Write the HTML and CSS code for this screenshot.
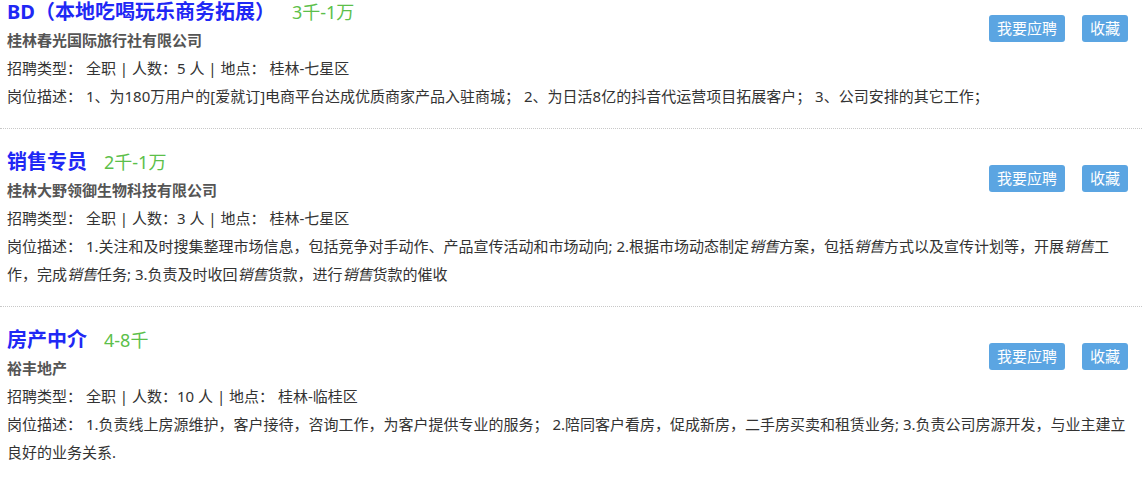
FILE: index.html
```html
<!DOCTYPE html>
<html lang="zh-CN">
<head>
  <meta charset="UTF-8">
  <meta name="viewport" content="width=device-width, initial-scale=1.0">
  <title>招聘信息</title>
  <link rel="stylesheet" href="styles.css">
</head>
<body>

  <div class="job-list">

    <div class="job">
      <div class="job-btns">
        <a class="btn">我要应聘</a>
        <a class="btn">收藏</a>
      </div>
      <h3 class="job-title">BD（本地吃喝玩乐商务拓展）<span class="salary">3千-1万</span></h3>
      <div class="company">桂林春光国际旅行社有限公司</div>
      <div class="line">招聘类型： 全职 | 人数：5 人 | 地点： 桂林-七星区</div>
      <div class="line">岗位描述： 1、为180万用户的[爱就订]电商平台达成优质商家产品入驻商城； 2、为日活8亿的抖音代运营项目拓展客户； 3、公司安排的其它工作；</div>
    </div>

    <div class="job">
      <div class="job-btns">
        <a class="btn">我要应聘</a>
        <a class="btn">收藏</a>
      </div>
      <h3 class="job-title">销售专员<span class="salary">2千-1万</span></h3>
      <div class="company">桂林大野领御生物科技有限公司</div>
      <div class="line">招聘类型： 全职 | 人数：3 人 | 地点： 桂林-七星区</div>
      <div class="line">岗位描述： 1.关注和及时搜集整理市场信息，包括竞争对手动作、产品宣传活动和市场动向; 2.根据市场动态制定<em>销售</em>方案，包括<em>销售</em>方式以及宣传计划等，开展<em>销售</em>工作，完成<em>销售</em>任务; 3.负责及时收回<em>销售</em>货款，进行<em>销售</em>货款的催收</div>
    </div>

    <div class="job">
      <div class="job-btns">
        <a class="btn">我要应聘</a>
        <a class="btn">收藏</a>
      </div>
      <h3 class="job-title">房产中介<span class="salary">4-8千</span></h3>
      <div class="company">裕丰地产</div>
      <div class="line">招聘类型： 全职 | 人数：10 人 | 地点： 桂林-临桂区</div>
      <div class="line">岗位描述： 1.负责线上房源维护，客户接待，咨询工作，为客户提供专业的服务； 2.陪同客户看房，促成新房，二手房买卖和租赁业务; 3.负责公司房源开发，与业主建立良好的业务关系.</div>
    </div>

  </div>

</body>
</html>
```

FILE: styles.css
```css
body {
  margin: 0;
  font-family: "Noto Sans", "Noto Sans CJK SC", sans-serif;
  font-size: 15px;
  color: #333;
  background: #fff;
}
.job-list {
  margin-top: -21px; /* 列表顶部被滚动裁掉一点 */
}
.job {
  padding: 19px 14px 18px 7px;
  border-bottom: 1px dotted #c8c8c8;
  line-height: 28px;
}
.job-btns {
  float: right;
  margin-top: 17px;
  display: flex;
  gap: 17px;
}
.btn {
  display: block;
  height: 27px;
  line-height: 27px;
  padding: 0 8px;
  background: #5ba5e2;
  color: #fff;
  border-radius: 3px;
  font-size: 15px;
  cursor: pointer;
}
.job-title {
  margin: 0;
  font-size: 20px;
  font-weight: bold;
  color: #1f28f5;
}
.salary {
  margin-left: 17px;
  font-size: 18px;
  font-weight: normal;
  color: #5cbf4a;
}
.company {
  font-weight: bold;
  color: #555;
}
.line em {
  font-style: italic;
}
```
